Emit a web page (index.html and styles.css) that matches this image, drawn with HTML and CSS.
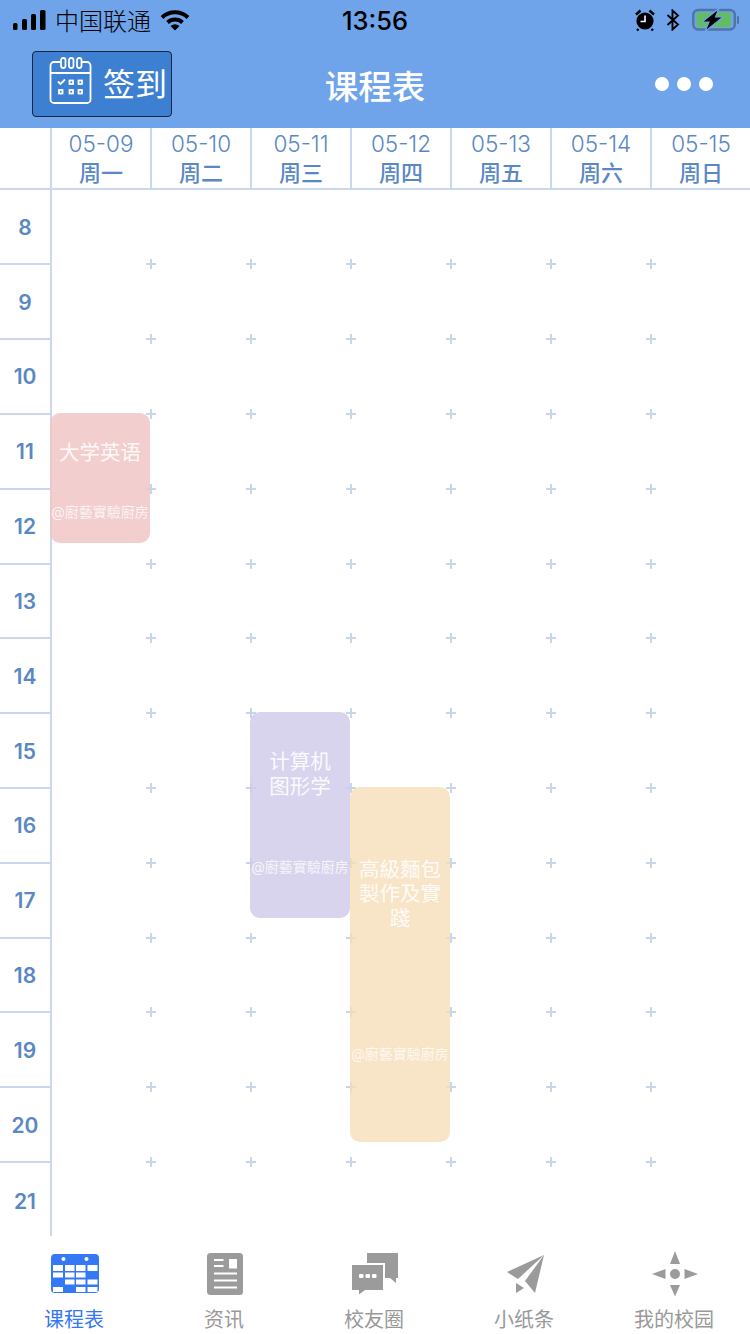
FILE: index.html
```html
<!DOCTYPE html>
<html lang="zh-CN">
<head>
  <meta charset="UTF-8" />
  <meta name="viewport" content="width=device-width, initial-scale=1" />
  <title>课程表</title>
  <link rel="stylesheet" href="styles.css">
</head>
<body>

<div class="status">
  <div class="status-left">
    <svg width="34" height="22" viewBox="0 0 34 22" fill="#000">
      <rect x="1" y="14" width="4.5" height="7" rx="1.5"/>
      <rect x="10" y="10" width="5" height="11" rx="1.5"/>
      <rect x="19" y="5" width="5" height="16" rx="1.5"/>
      <rect x="28" y="1" width="5.5" height="20" rx="1.5"/>
    </svg>
    <span class="carrier">中国联通</span>
    <svg width="30" height="22" viewBox="0 0 30 22">
      <path d="M2 8.5A19 19 0 0 1 28 8.5" fill="none" stroke="#000" stroke-width="4"/>
      <path d="M7.5 13.5A11 11 0 0 1 22.5 13.5" fill="none" stroke="#000" stroke-width="4"/>
      <path d="M15 21.5L10.5 17A6.5 6.5 0 0 1 19.5 17Z" fill="#000"/>
    </svg>
  </div>
  <div class="status-time">13:56</div>
  <div class="status-right">
    <svg width="22" height="24" viewBox="0 0 22 24">
      <circle cx="11" cy="13" r="8.6" fill="#000"/>
      <path d="M2 6.5L6.5 2.5M20 6.5L15.5 2.5M4.5 21L3 22.5M17.5 21L19 22.5" stroke="#000" stroke-width="2.4" fill="none"/>
      <path d="M11 7.5V13.5H6.5" stroke="#fff" stroke-width="1.6" fill="none"/>
    </svg>
    <svg class="bt" width="14" height="22" viewBox="0 0 14 22">
      <path d="M1.5 6L12 15.5L6.5 20.5V1.5L12 6.5L1.5 16" fill="none" stroke="#000" stroke-width="1.9"/>
    </svg>
    <svg width="48" height="24" viewBox="0 0 48 24">
      <rect x="1.3" y="2" width="41.5" height="19.5" rx="5" fill="none" stroke="#4f75a8" stroke-width="2.4"/>
      <rect x="4.5" y="4.5" width="34.5" height="14.5" rx="2" fill="#62bd60"/>
      <rect x="45" y="8" width="2" height="8" rx="1" fill="#4f75a8"/>
      <path d="M27 0.5L10 14H17L13 23.5L31 9H23.5Z" fill="#000" stroke="#6fa3ea" stroke-width="1.2"/>
    </svg>
  </div>
</div>

<header class="navbar">
  <button class="sign-btn" type="button">
    <svg width="44" height="48" viewBox="0 0 44 48" fill="none" stroke="#fff" stroke-width="1.8">
      <path d="M11 5H5A3.5 3.5 0 0 0 1.5 8.5V42.5A3.5 3.5 0 0 0 5 46H38A3.5 3.5 0 0 0 41.5 42.5V8.5A3.5 3.5 0 0 0 38 5H33"/>
      <path d="M1.5 16H41.5"/>
      <rect x="12" y="1" width="4.5" height="10" rx="2.2"/>
      <rect x="20" y="1" width="4.5" height="10" rx="2.2"/>
      <rect x="28" y="1" width="4.5" height="10" rx="2.2"/>
      <path d="M9 24.5L11.5 27L16 22.5"/>
      <rect x="20.5" y="23.5" width="3.5" height="3.5"/>
      <rect x="29.5" y="23.5" width="3.5" height="3.5"/>
      <rect x="10" y="33" width="3.5" height="3.5"/>
      <rect x="20.5" y="33" width="3.5" height="3.5"/>
      <rect x="29.5" y="33" width="3.5" height="3.5"/>
    </svg>
    <span>签到</span>
  </button>
  <h1 class="nav-title">课程表</h1>
  <div class="nav-more"><i></i><i></i><i></i></div>
</header>

<div class="week">
  <div class="week-corner"></div>
  <div class="day"><span>05-09</span><b>周一</b></div>
  <div class="day"><span>05-10</span><b>周二</b></div>
  <div class="day"><span>05-11</span><b>周三</b></div>
  <div class="day"><span>05-12</span><b>周四</b></div>
  <div class="day"><span>05-13</span><b>周五</b></div>
  <div class="day"><span>05-14</span><b>周六</b></div>
  <div class="day"><span>05-15</span><b>周日</b></div>
</div>

<main class="board">
  <div class="row"><div class="hour">8</div><div class="slots"><i></i><i></i><i></i><i></i><i></i><i></i></div></div>
  <div class="row"><div class="hour">9</div><div class="slots"><i></i><i></i><i></i><i></i><i></i><i></i></div></div>
  <div class="row"><div class="hour">10</div><div class="slots"><i></i><i></i><i></i><i></i><i></i><i></i></div></div>
  <div class="row"><div class="hour">11</div><div class="slots"><i></i><i></i><i></i><i></i><i></i><i></i></div></div>
  <div class="row"><div class="hour">12</div><div class="slots"><i></i><i></i><i></i><i></i><i></i><i></i></div></div>
  <div class="row"><div class="hour">13</div><div class="slots"><i></i><i></i><i></i><i></i><i></i><i></i></div></div>
  <div class="row"><div class="hour">14</div><div class="slots"><i></i><i></i><i></i><i></i><i></i><i></i></div></div>
  <div class="row"><div class="hour">15</div><div class="slots"><i></i><i></i><i></i><i></i><i></i><i></i></div></div>
  <div class="row"><div class="hour">16</div><div class="slots"><i></i><i></i><i></i><i></i><i></i><i></i></div></div>
  <div class="row"><div class="hour">17</div><div class="slots"><i></i><i></i><i></i><i></i><i></i><i></i></div></div>
  <div class="row"><div class="hour">18</div><div class="slots"><i></i><i></i><i></i><i></i><i></i><i></i></div></div>
  <div class="row"><div class="hour">19</div><div class="slots"><i></i><i></i><i></i><i></i><i></i><i></i></div></div>
  <div class="row"><div class="hour">20</div><div class="slots"><i></i><i></i><i></i><i></i><i></i><i></i></div></div>
  <div class="row last"><div class="hour">21</div><div class="slots"></div></div>

  <div class="course course-english">
    <div class="course-name">大学英语</div>
    <div class="course-place">@廚藝實驗廚房</div>
  </div>
  <div class="course course-graphics">
    <div class="course-name">计算机<br>图形学</div>
    <div class="course-place">@廚藝實驗廚房</div>
  </div>
  <div class="course course-bread">
    <div class="course-name">高級麵包<br>製作及實<br>踐</div>
    <div class="course-place">@廚藝實驗廚房</div>
  </div>
</main>

<nav class="tabs">
  <a class="tab active" href="#">
    <svg width="48" height="44" viewBox="0 0 48 44">
      <rect x="0" y="2" width="48" height="39" rx="4" fill="#3478f6"/>
      <circle cx="12.5" cy="7" r="2" fill="#fff"/>
      <circle cx="35.5" cy="7" r="2" fill="#fff"/>
      <g fill="#fff">
        <rect x="2" y="13" width="10" height="6"/><rect x="14" y="13" width="9.5" height="6"/><rect x="25" y="13" width="9.5" height="6"/><rect x="36.5" y="13" width="10" height="6"/>
        <rect x="2" y="20.5" width="10" height="5"/><rect x="14" y="20.5" width="9.5" height="5"/><rect x="25" y="20.5" width="9.5" height="5"/>
        <rect x="14" y="27.5" width="9.5" height="5"/><rect x="25" y="27.5" width="9.5" height="5"/><rect x="36.5" y="27.5" width="10" height="5"/>
        <rect x="2" y="35" width="10" height="5"/><rect x="25" y="35" width="9.5" height="5"/><rect x="36.5" y="35" width="10" height="5"/>
      </g>
    </svg>
    <span>课程表</span>
  </a>
  <a class="tab" href="#">
    <svg width="48" height="44" viewBox="0 0 48 44">
      <rect x="6" y="1" width="36" height="42" rx="3.5" fill="#9b9b9b"/>
      <g fill="#fff">
        <rect x="13" y="7" width="9.5" height="2"/><rect x="13" y="13" width="9.5" height="2"/>
        <rect x="28" y="7" width="8" height="9.5"/>
        <rect x="13" y="20.5" width="23" height="2"/><rect x="13" y="27.5" width="23" height="2"/><rect x="13" y="34.5" width="23" height="2"/>
      </g>
    </svg>
    <span>资讯</span>
  </a>
  <a class="tab" href="#">
    <svg width="48" height="44" viewBox="0 0 48 44">
      <path d="M16 1H47V26H45V31L39 26H34V11H16Z" fill="#9b9b9b"/>
      <path d="M1 13H32V38H14L8 42.5V38H1Z" fill="#9b9b9b"/>
      <rect x="8" y="22" width="4.5" height="4" rx="1" fill="#fff"/>
      <rect x="14.5" y="22" width="4.5" height="4" rx="1" fill="#fff"/>
      <rect x="21" y="22" width="4.5" height="4" rx="1" fill="#fff"/>
    </svg>
    <span>校友圈</span>
  </a>
  <a class="tab" href="#">
    <svg width="48" height="44" viewBox="0 0 48 44" fill="#9b9b9b">
      <path d="M43 3L6 20L17 27Z"/>
      <path d="M43 3L24 29L34 41Z"/>
      <path d="M15 31V41L23 36Z"/>
    </svg>
    <span>小纸条</span>
  </a>
  <a class="tab" href="#">
    <svg width="48" height="44" viewBox="0 0 48 44" fill="#9b9b9b">
      <circle cx="24" cy="22" r="5"/>
      <path d="M24 -1L29 12H19Z"/>
      <path d="M24 44.5L19 33H29Z"/>
      <path d="M1 22L14.5 17V27Z"/>
      <path d="M47 22L33.5 17V27Z"/>
    </svg>
    <span>我的校园</span>
  </a>
</nav>

</body>
</html>
```

FILE: styles.css
```css
* {
  box-sizing: border-box;
}
body {
  margin: 0;
  width: 750px;
  height: 1334px;
  overflow: hidden;
  display: flex;
  flex-direction: column;
  background-color: #fff;
  font-family: Inter, "Noto Sans CJK SC", sans-serif;
}

/* status bar */
.status {
  height: 40px;
  flex: none;
  display: grid;
  grid-template-columns: 1fr auto 1fr;
  align-items: center;
  padding: 0 10px;
  background-color: #6fa3ea;
  color: #000;
}
.status-left {
  display: flex;
  align-items: center;
  gap: 9px;
  padding-left: 2px;
}
.carrier {
  width: 96px;
  margin-top: -2px;
  font-size: 24px;
  font-weight: 300;
}
.status-time {
  font-size: 25.5px;
  font-weight: 500;
}
.status-right {
  display: flex;
  align-items: center;
  justify-content: flex-end;
  gap: 11px;
}
.status-right .bt {
  margin: 0 1px 0 -1px;
}

/* top navigation */
.navbar {
  height: 88px;
  flex: none;
  display: grid;
  grid-template-columns: 1fr auto 1fr;
  align-items: center;
  padding: 0 32px;
  background-color: #6fa3ea;
}
.sign-btn {
  width: 140px;
  height: 66px;
  padding: 0 0 0 16px;
  display: flex;
  align-items: center;
  gap: 10px;
  background-color: #3d7fd1;
  border: 1px solid #17263b;
  border-radius: 4px;
  color: #fff;
  font-family: inherit;
  font-size: 32px;
  font-weight: 400;
}
.sign-btn svg {
  margin-bottom: 6px;
}
.sign-btn span {
  margin-bottom: 5px;
}
.nav-title {
  margin: 0;
  color: #fff;
  font-size: 33.5px;
  font-weight: 500;
}
.nav-more {
  display: flex;
  justify-content: flex-end;
  gap: 8px;
  padding-right: 5px;
}
.nav-more i {
  width: 14px;
  height: 14px;
  border-radius: 50%;
  background-color: #fff;
}

/* week header */
.week {
  height: 62px;
  flex: none;
  display: flex;
  border-bottom: 2px solid #c9d8ec;
  color: #5a88c4;
}
.week-corner {
  width: 50px;
}
.day {
  width: 100px;
  display: flex;
  flex-direction: column;
  align-items: center;
  border-left: 2px solid #c9d8ec;
}
.day span {
  margin-top: 1px;
  font-size: 22.5px;
  font-weight: 300;
  line-height: 30px;
}
.day b {
  font-size: 22px;
  font-weight: 500;
  line-height: 29px;
}

/* timetable */
.board {
  flex: 1;
  position: relative;
  overflow: hidden;
}
.row {
  height: 74.83px;
  display: flex;
}
.row:first-child {
  height: 75.2px;
}
.hour {
  width: 50px;
  display: flex;
  align-items: center;
  justify-content: center;
  padding-top: 1px;
  border-bottom: 2px solid #c9d8ec;
  color: #5a88c4;
  font-size: 21px;
  font-weight: 600;
}
.row.last .hour {
  border-bottom: none;
}
.slots {
  flex: 1;
  display: flex;
  border-left: 2px solid #c9d8ec;
}
.slots i {
  width: 100px;
  position: relative;
}
.slots i:first-child {
  width: 98px;
}
.slots i::before,
.slots i::after {
  content: "";
  position: absolute;
  background-color: #c8d6ec;
}
.slots i::before {
  right: -6px;
  bottom: 0;
  width: 10px;
  height: 2px;
}
.slots i::after {
  right: -2px;
  bottom: -4px;
  width: 2px;
  height: 10px;
}

/* course cards */
.course {
  position: absolute;
  z-index: 1;
  display: grid;
  grid-template-rows: 6fr 3fr 1fr;
  width: 100px;
  border-radius: 10px;
  color: rgba(255, 255, 255, 0.9);
  text-align: center;
}
.course-name {
  align-self: center;
  padding-top: 2px;
  font-size: 20.5px;
  line-height: 24.5px;
}
.course-place {
  align-self: center;
  font-size: 14px;
  white-space: nowrap;
  color: rgba(255, 255, 255, 0.75);
}
.course-english {
  left: 50px;
  top: 223px;
  height: 130px;
  background-color: rgba(240, 198, 198, 0.85);
}
.course-graphics {
  left: 250px;
  top: 522px;
  height: 206px;
  background-color: rgba(207, 201, 232, 0.8);
}
.course-bread {
  left: 350px;
  top: 597px;
  height: 355px;
  background-color: rgba(246, 221, 184, 0.8);
}

/* bottom tabs */
.tabs {
  height: 98px;
  flex: none;
  display: flex;
  background-color: #fff;
  position: relative;
  z-index: 2;
}
.tab {
  width: 150px;
  height: 98px;
  display: flex;
  flex-direction: column;
  align-items: center;
  padding-top: 16px;
  color: #999;
  font-size: 20px;
  font-weight: 400;
  text-decoration: none;
}
.tab svg {
  flex: none;
  overflow: visible;
}
.tab span {
  margin: 10px 2px 0 0;
  line-height: 28px;
}
.tab.active {
  color: #3478f6;
}
```
